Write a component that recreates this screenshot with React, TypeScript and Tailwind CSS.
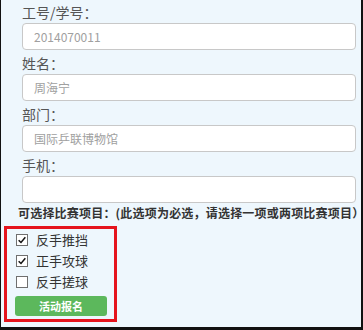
const fields = [
  { label: "工号/学号：", value: "2014070011" },
  { label: "姓名：", value: "周海宁" },
  { label: "部门：", value: "国际乒联博物馆" },
  { label: "手机：", value: "" },
];

const events = [
  { name: "反手推挡", checked: true },
  { name: "正手攻球", checked: true },
  { name: "反手搓球", checked: false },
];

const Check = ({ checked }: { checked: boolean }) => (
  <span className="flex h-[12px] w-[12px] items-center justify-center border border-[#6f6f6f] bg-white">
    {checked && (
      <svg viewBox="0 0 12 12" className="h-[10px] w-[10px]">
        <path d="M2 6.2 L4.8 9 L10 2.8" fill="none" stroke="#111" strokeWidth="1.8" />
      </svg>
    )}
  </span>
);

export default function App() {
  return (
    <div className="box-border h-[330px] w-[363px] border-b-[3px] border-l border-r-2 border-[#111] bg-[#eef7fd] font-['Noto_Sans_CJK_SC',sans-serif]">
      <div className="pl-[21px] pr-[5px] pt-[2px]">
        {fields.map((f, i) => (
          <div key={f.label} className={i > 0 ? "mt-[3px]" : ""}>
            <div className="h-[20px] text-[14px] leading-[20px] text-[#555]">{f.label}</div>
            <input
              readOnly
              value={f.value}
              className="mt-[1px] box-border h-[27px] w-[334px] rounded-[4px] border border-[#c8c8c8] bg-white pl-[11px] text-[12px] text-[#a0a0a0] outline-none"
            />
          </div>
        ))}
      </div>
      <div className="mt-[2px] pl-[17px] text-[12px] font-bold leading-[16px] tracking-[0.2px] text-[#333]">
        可选择比赛项目：(此选项为必选，请选择一项或两项比赛项目）
      </div>
      <div className="ml-[3px] mt-[5px] box-border w-[113px] border-[3px] border-[#e5141d] pb-[3px] pl-[8px]">
        {events.map((e) => (
          <div key={e.name} className="flex h-[21px] items-center gap-[8px] pl-[1px]">
            <Check checked={e.checked} />
            <span className="text-[13px] text-[#333]">{e.name}</span>
          </div>
        ))}
        <button className="mt-[4px] flex h-[20px] w-[92px] items-center justify-center rounded-[3px] bg-[#5cb85c] text-[11px] font-bold text-white">
          活动报名
        </button>
      </div>
    </div>
  );
}
